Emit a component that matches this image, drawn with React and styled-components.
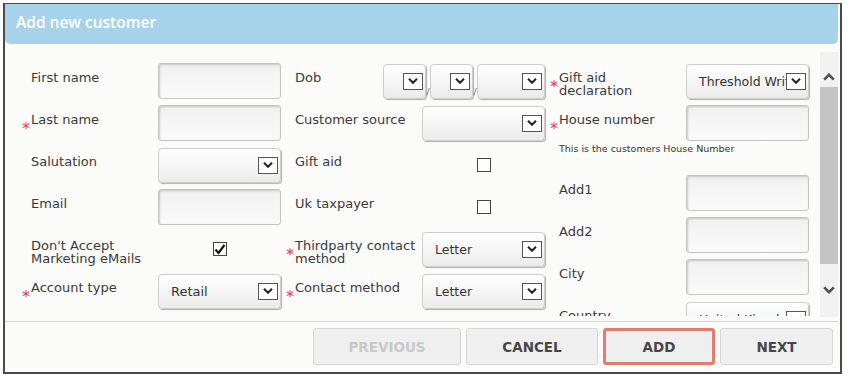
import React from "react";
import styled, { createGlobalStyle } from "styled-components";

const Global = createGlobalStyle`
  body {
    margin: 0;
    background: #fff;
    font-family: "DejaVu Sans", sans-serif;
  }
`;

const Frame = styled.div`
  margin: 3px 0 0 3px;
  width: 839px;
  height: 371px;
  box-sizing: border-box;
  border: solid #4a4a4a;
  border-width: 1px 2px 2px 2px;
  background: #fbfbf9;
  padding-right: 2px;
  display: flex;
  flex-direction: column;
`;

const Header = styled.div`
  height: 40px;
  flex: none;
  background: #a7d3ea;
  border-radius: 0 0 5px 5px;
  display: flex;
  align-items: center;
  padding: 0 0 4px 11px;
  box-sizing: border-box;
  color: #fff;
  font-family: "Open Sans", sans-serif;
  font-weight: 600;
  font-size: 15.5px;
`;

const Main = styled.div`
  height: 277px;
  flex: none;
  display: flex;
  border-bottom: 1px solid #c3dcec;
`;

const Viewport = styled.div`
  width: 815px;
  height: 266px;
  margin-top: 6px;
  overflow: hidden;
`;

const FormGrid = styled.div`
  display: grid;
  grid-template-columns: repeat(3, 264px);
  padding: 13px 0 0 13px;
  align-items: start;
`;

const Column = styled.div`
  display: flex;
  flex-direction: column;
  gap: 6px;
`;

const Row = styled.div`
  display: grid;
  grid-template-columns: 13px 127px 123px;
  height: 36px;
`;

const Star = styled.span`
  color: #ea3b3b;
  font-size: 16px;
  line-height: 16px;
  padding-top: 16px;
  text-align: right;
  padding-right: 1px;
`;

const Label = styled.div`
  font-size: 13px;
  line-height: 13px;
  color: #3a3a3a;
  padding-top: 8px;
  padding-right: 4px;
`;

const Cell = styled.div`
  display: flex;
  align-items: center;
  justify-content: ${(p) => (p.$center ? "center" : "flex-end")};
  justify-self: ${(p) => (p.$center ? "center" : "end")};
  height: 36px;
`;

const TextBox = styled.input`
  width: 123px;
  height: 36px;
  box-sizing: border-box;
  border: 1px solid #c4c4c4;
  border-radius: 3px;
  background: linear-gradient(#f0f0f0, #fafafa);
  box-shadow: inset 1px 1px 2px rgba(0, 0, 0, 0.18);
  outline: none;
`;

const SelectBox = styled.div`
  width: ${(p) => p.$w || 123}px;
  height: ${(p) => p.$h || 35}px;
  box-sizing: border-box;
  border: 1px solid #cdcdcd;
  border-radius: 4px;
  background: linear-gradient(#ffffff, #ebebeb);
  box-shadow: 1px 1px 1px rgba(0, 0, 0, 0.3);
  display: flex;
  align-items: center;
  padding: 0 2px 0 12px;
  font-size: 13px;
  color: #333;
  overflow: hidden;
  white-space: nowrap;
`;

const SelectText = styled.span`
  flex: 1;
  overflow: hidden;
  font-size: ${(p) => (p.$small ? 12.5 : 13)}px;
`;

const ArrowBox = styled.span`
  flex: none;
  width: 20px;
  height: 17px;
  box-sizing: border-box;
  border: 1px solid #555;
  background: #fff;
  display: flex;
  align-items: center;
  justify-content: center;
`;

const Slash = styled.span`
  width: 4px;
  align-self: flex-end;
  font-size: 9px;
  line-height: 9px;
  color: #666;
  margin-bottom: 2px;
  text-align: center;
`;

const Check = styled.span`
  width: 14px;
  height: 14px;
  box-sizing: border-box;
  border: 1px solid #444;
  background: #fff;
  display: flex;
  align-items: center;
  justify-content: center;
`;

const Helper = styled.div`
  height: 25px;
  margin-top: -3px;
  padding-left: 13px;
  font-size: 9.5px;
  line-height: 10px;
  color: #333;
`;

const Scrollbar = styled.div`
  width: 18px;
  height: 265px;
  margin-top: 8px;
  background: #f1f1f1;
  display: flex;
  flex-direction: column;
`;

const ScrollBtn = styled.div`
  height: ${(p) => p.$h}px;
  display: flex;
  align-items: ${(p) => (p.$up ? "flex-end" : "center")};
  justify-content: center;
  padding-bottom: ${(p) => (p.$up ? 6 : 2)}px;
  box-sizing: border-box;
`;

const Thumb = styled.div`
  height: 177px;
  background: #c4c4c4;
`;

const Footer = styled.div`
  flex: 1;
  display: flex;
  justify-content: flex-end;
  align-items: flex-start;
  gap: 5px;
  padding: 6px 5px 0 0;
`;

const Button = styled.button`
  width: ${(p) => p.$w}px;
  height: 37px;
  box-sizing: border-box;
  background: #efefef;
  border: ${(p) => (p.$focus ? "3px solid #e27c70" : "1px solid #d6d6d6")};
  border-radius: 3px;
  font-family: "DejaVu Sans", sans-serif;
  font-weight: bold;
  font-size: 13.5px;
  color: ${(p) => (p.disabled ? "#c9c9c9" : "#474747")};
  padding: 0;
`;

const Chevron = ({ up, w = 10, h = 6, sw = 2, color = "#222" }) => (
  <svg width={w} height={h} viewBox="0 0 10 6">
    <path
      d={up ? "M1 5.2 L5 1.2 L9 5.2" : "M1 0.8 L5 4.8 L9 0.8"}
      fill="none"
      stroke={color}
      strokeWidth={sw}
    />
  </svg>
);

const Select = ({ value, w, small }) => (
  <SelectBox $w={w}>
    <SelectText $small={small}>{value}</SelectText>
    <ArrowBox>
      <Chevron />
    </ArrowBox>
  </SelectBox>
);

const Checkbox = ({ checked }) => (
  <Check>
    {checked && (
      <svg width="12" height="11" viewBox="0 0 12 11">
        <path d="M1.5 5.5 L4.5 9 L10.5 1" fill="none" stroke="#111" strokeWidth="2.2" />
      </svg>
    )}
  </Check>
);

const Field = ({ label, required, children, center }) => (
  <Row>
    <Star>{required ? "*" : ""}</Star>
    <Label>{label}</Label>
    <Cell $center={center}>{children}</Cell>
  </Row>
);

export default function App() {
  return (
    <>
      <Global />
      <Frame>
        <Header>Add new customer</Header>
        <Main>
          <Viewport>
            <FormGrid>
              <Column>
                <Field label="First name"><TextBox /></Field>
                <Field label="Last name" required><TextBox /></Field>
                <Field label="Salutation"><Select value="" /></Field>
                <Field label="Email"><TextBox /></Field>
                <Field label="Don't Accept Marketing eMails" center>
                  <Checkbox checked />
                </Field>
                <Field label="Account type" required><Select value="Retail" /></Field>
              </Column>
              <Column>
                <Field label="Dob">
                  <Select value="" w={43} />
                  <Slash>/</Slash>
                  <Select value="" w={43} />
                  <Slash>/</Slash>
                  <Select value="" w={68} />
                </Field>
                <Field label="Customer source"><Select value="" /></Field>
                <Field label="Gift aid" center><Checkbox /></Field>
                <Field label="Uk taxpayer" center><Checkbox /></Field>
                <Field label="Thirdparty contact method" required>
                  <Select value="Letter" small />
                </Field>
                <Field label="Contact method" required>
                  <Select value="Letter" small />
                </Field>
              </Column>
              <Column>
                <Field label="Gift aid declaration" required>
                  <Select value="Threshold Written" small />
                </Field>
                <Field label="House number" required><TextBox /></Field>
                <Helper>This is the customers House Number</Helper>
                <Field label="Add1"><TextBox /></Field>
                <Field label="Add2"><TextBox /></Field>
                <Field label="City"><TextBox /></Field>
                <Field label="Country"><Select value="United Kingdom" small /></Field>
              </Column>
            </FormGrid>
          </Viewport>
          <Scrollbar>
            <ScrollBtn $up $h={35}>
              <Chevron up w={12} h={8} sw={2.2} color="#505050" />
            </ScrollBtn>
            <Thumb />
            <ScrollBtn $h={53}>
              <Chevron w={12} h={8} sw={2.2} color="#505050" />
            </ScrollBtn>
          </Scrollbar>
        </Main>
        <Footer>
          <Button $w={148} disabled>PREVIOUS</Button>
          <Button $w={132}>CANCEL</Button>
          <Button $w={112} $focus>ADD</Button>
          <Button $w={113}>NEXT</Button>
        </Footer>
      </Frame>
    </>
  );
}
